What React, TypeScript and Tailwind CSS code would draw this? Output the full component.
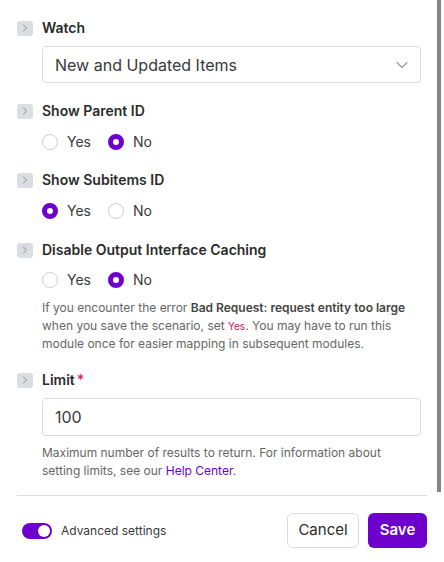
import React from 'react'

const PURPLE = 'bg-[#6d00cc]'

function Badge() {
  return (
    <span className="flex h-[15px] w-[16px] shrink-0 items-center justify-center rounded-[3px] bg-[#dadee3]">
      <svg width="6" height="8" viewBox="0 0 6 8" fill="none">
        <path d="M1.5 1 L4.5 4 L1.5 7" stroke="#868b92" strokeWidth="1" strokeLinecap="round" strokeLinejoin="round" />
      </svg>
    </span>
  )
}

function Label({ children, required }: { children: React.ReactNode; required?: boolean }) {
  return (
    <div className="flex h-5 items-center gap-[9px]">
      <Badge />
      <span className="text-[14px] font-semibold leading-5 text-[#2b2b2b]">
        {children}
        {required && <span className="ml-[2px] text-[#e0245e]">*</span>}
      </span>
    </div>
  )
}

function Radio({ checked, label }: { checked: boolean; label: string }) {
  return (
    <label className="flex items-center gap-[9px]">
      <span
        className={
          checked
            ? 'h-4 w-4 rounded-full border-[5px] border-[#6d00cc] bg-white'
            : 'h-4 w-4 rounded-full border border-[#cfcfcf] bg-white'
        }
      />
      <span className="text-[14px] leading-5 text-[#3a3a3a]">{label}</span>
    </label>
  )
}

function YesNo({ value, className }: { value: 'yes' | 'no'; className: string }) {
  return (
    <div className={`flex h-5 items-center gap-[17px] pl-[25px] ${className}`}>
      <Radio checked={value === 'yes'} label="Yes" />
      <Radio checked={value === 'no'} label="No" />
    </div>
  )
}

export default function App() {
  return (
    <div className="flex h-[562px] w-[444px] flex-col bg-white font-['Inter',sans-serif]">
      {/* scroll area */}
      <div className="flex h-[495px]">
        <div className="flex-1 pl-[17px] pr-[16px] pt-[18px]">
          <Label>Watch</Label>
          <div className="ml-[25px] mt-2 flex h-[37px] items-center justify-between rounded-[4px] border border-[#dcdcdc] pl-[12px] pr-[12px]">
            <span className="text-[16px] text-[#3a3a3a]">New and Updated Items</span>
            <svg width="12" height="8" viewBox="0 0 12 8" fill="none">
              <path d="M1 1.5 L6 6.5 L11 1.5" stroke="#9a9a9a" strokeWidth="1.1" strokeLinecap="round" strokeLinejoin="round" />
            </svg>
          </div>

          <div className="mt-[18px]">
            <Label>Show Parent ID</Label>
          </div>
          <YesNo value="no" className="mt-[11px]" />

          <div className="mt-[18px]">
            <Label>Show Subitems ID</Label>
          </div>
          <YesNo value="yes" className="mt-[11px]" />

          <div className="mt-[19px]">
            <Label>Disable Output Interface Caching</Label>
          </div>
          <YesNo value="no" className="mt-[10px]" />
          <p className="ml-[25px] mt-[9px] text-[12px] leading-[18px] text-[#666]">
            If you encounter the error{' '}
            <b className="font-semibold leading-[18px] text-[#444]">Bad Request: request entity too large</b> when you
            save the scenario, set <span className="text-[10px] leading-[18px] text-[#c2185b]">Yes</span>. You may have to
            run this module once for easier mapping in subsequent modules.
          </p>

          <div className="mt-[17px]">
            <Label required>Limit</Label>
          </div>
          <div className="ml-[25px] mt-2 flex h-[38px] items-center rounded-[4px] border border-[#dcdcdc] pl-[12px]">
            <span className="text-[16px] text-[#3a3a3a]">100</span>
          </div>
          <p className="ml-[25px] mt-2 text-[12px] leading-[18px] text-[#666]">
            Maximum number of results to return. For information about setting limits, see our{' '}
            <a className="leading-[18px] text-[#6d00cc]">Help Center</a>.
          </p>
        </div>
        <div className="mr-[3px] h-[492px] w-[4px] bg-[#858585]" />
      </div>

      {/* footer */}
      <div className="ml-[17px] mr-[17px] border-t border-[#dedede]" />
      <div className="flex items-center justify-between pl-[22px] pr-[17px] pt-[17px]">
        <div className="flex items-center gap-[9px]">
          <span className={`flex h-4 w-[30px] items-center justify-end rounded-full ${PURPLE} pr-[2px]`}>
            <span className="h-3 w-3 rounded-full bg-white" />
          </span>
          <span className="text-[12px] text-[#3a3a3a]">Advanced settings</span>
        </div>
        <div className="flex items-center gap-[9px]">
          <button className="h-[35px] w-[72px] rounded-[6px] border border-[#dcdcdc] bg-white text-[15px] text-[#2b2b2b]">
            Cancel
          </button>
          <button className={`h-[35px] w-[59px] rounded-[6px] ${PURPLE} text-[15px] font-semibold text-white`}>
            Save
          </button>
        </div>
      </div>
    </div>
  )
}
